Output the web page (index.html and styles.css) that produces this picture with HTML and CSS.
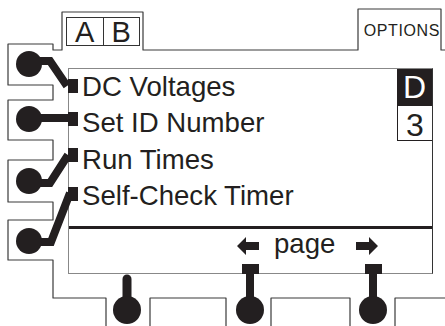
FILE: index.html
```html
<!DOCTYPE html>
<html>
<head>
    <title>Display Panel</title>
    <link rel="stylesheet" href="styles.css">
</head>
<body>
    <div class="device">
        <div class="tabs">
            <div class="ab"><span>A</span><span class="b">B</span></div>
            <div class="options">OPTIONS</div>
        </div>

        <div class="screen">
            <div class="menu">
                <ul class="items">
                    <li>DC Voltages</li>
                    <li>Set ID Number</li>
                    <li>Run Times</li>
                    <li>Self-Check Timer</li>
                </ul>
                <div class="page-ind">
                    <div class="letter">D</div>
                    <div class="num">3</div>
                </div>
            </div>
            <div class="pager">
                <svg class="arrow" width="22" height="18" viewBox="0 0 22 18"><path d="M0 9 L9 0 V5 H22 V13 H9 V18 Z"/></svg>
                <span class="page">page</span>
                <svg class="arrow" width="22" height="18" viewBox="0 0 22 18"><path d="M22 9 L13 0 V5 H0 V13 H13 V18 Z"/></svg>
            </div>
        </div>

        <!-- soft keys and their leads -->
        <svg class="keys" width="445" height="326" viewBox="0 0 445 326">
            <g class="outline">
                <path d="M106 326 V298 H53 V260 H8 V220 H53 V202 H8 V160 H53 V140 H8 V100 H53 V85 H8 V44 H53 V50 H62 V12 H143 V50 H358 V9 H441 V50 H445"/>
                <path d="M150 326 V298 H226 V326"/>
                <path d="M271 326 V298 H350 V326"/>
                <path d="M395 326 V298 H445"/>
            </g>
            <g class="lead">
                <path d="M29 61 H50 L67 86"/>
                <path d="M29 118 H70"/>
                <path d="M29 183 H50 L68 155"/>
                <path d="M29 242 H51 L70 193"/>
                <path class="stem" d="M127 279 V300"/>
                <path d="M250 270 V300"/>
                <path d="M373 270 V300"/>
            </g>
            <g class="knob">
                <circle cx="29" cy="64" r="13"/>
                <circle cx="29" cy="119" r="13"/>
                <circle cx="29" cy="181" r="13"/>
                <circle cx="29" cy="241" r="13"/>
                <circle cx="127" cy="310" r="14"/>
                <circle cx="250" cy="310" r="14"/>
                <circle cx="373" cy="310" r="14"/>
                <rect x="68" y="79" width="10" height="14"/>
                <rect x="68" y="112" width="10" height="14"/>
                <rect x="68" y="148" width="10" height="14"/>
                <rect x="68" y="187" width="10" height="14"/>
                <rect x="242" y="264" width="17" height="10"/>
                <rect x="365" y="264" width="17" height="10"/>
            </g>
        </svg>
    </div>
</body>
</html>
```

FILE: styles.css
```css
body {
    margin: 0;
    background-color: white;
    font-family: "Liberation Sans", Arial, sans-serif;
    color: #231f20;
}

.device {
    position: relative;
    width: 445px;
    height: 326px;
    overflow: hidden;
}

.tabs {
    display: flex;
    align-items: flex-start;
    height: 68px;
}

.ab {
    display: flex;
    margin-left: 66px;
    margin-top: 17px;
    width: 74px;
    height: 29px;
    border: 1px solid #333;
    box-sizing: border-box;
}

.ab span {
    flex: 1;
    text-align: center;
    font-size: 29px;
    line-height: 29px;
}

.ab .b {
    border-left: 1px solid #333;
}

.options {
    margin-left: auto;
    margin-right: 5px;
    margin-top: 23px;
    font-size: 16px;
    line-height: 16px;
    letter-spacing: 0.6px;
}

.screen {
    margin-left: 68px;
    width: 365px;
    height: 206px;
    box-sizing: border-box;
    border: 1px solid #888;
    border-right-color: #333;
    display: flex;
    flex-direction: column;
}

.menu {
    display: flex;
    height: 157px;
}

.items {
    flex: 1;
    list-style: none;
    margin: 0;
    padding: 0 0 0 13px;
    font-size: 27.6px;
    line-height: 36.3px;
}

.page-ind {
    width: 35px;
}

.letter {
    height: 37px;
    background-color: #231f20;
    color: white;
    text-align: center;
    font-size: 32px;
    line-height: 37px;
}

.num {
    height: 35px;
    box-sizing: border-box;
    border-left: 1px solid #231f20;
    border-bottom: 1px solid #231f20;
    padding-top: 5px;
    text-align: center;
    font-size: 32px;
    line-height: 29px;
}

.pager {
    display: flex;
    align-items: flex-start;
    border-top: 3px solid #231f20;
    height: 44px;
    padding-left: 168px;
}

.arrow {
    margin-top: 8px;
    fill: #231f20;
}

.page {
    margin: 1px 21px 0 15px;
    font-size: 27.6px;
    line-height: 27px;
}

.keys {
    position: absolute;
    left: 0;
    top: 0;
    pointer-events: none;
}

.outline path {
    fill: none;
    stroke: #3a3a3a;
    stroke-width: 1.2;
    stroke-linejoin: round;
}

.lead path {
    fill: none;
    stroke: #231f20;
    stroke-width: 8;
}

.lead .stem {
    stroke-width: 9;
    stroke-linecap: round;
}

.knob {
    fill: #231f20;
}
```
